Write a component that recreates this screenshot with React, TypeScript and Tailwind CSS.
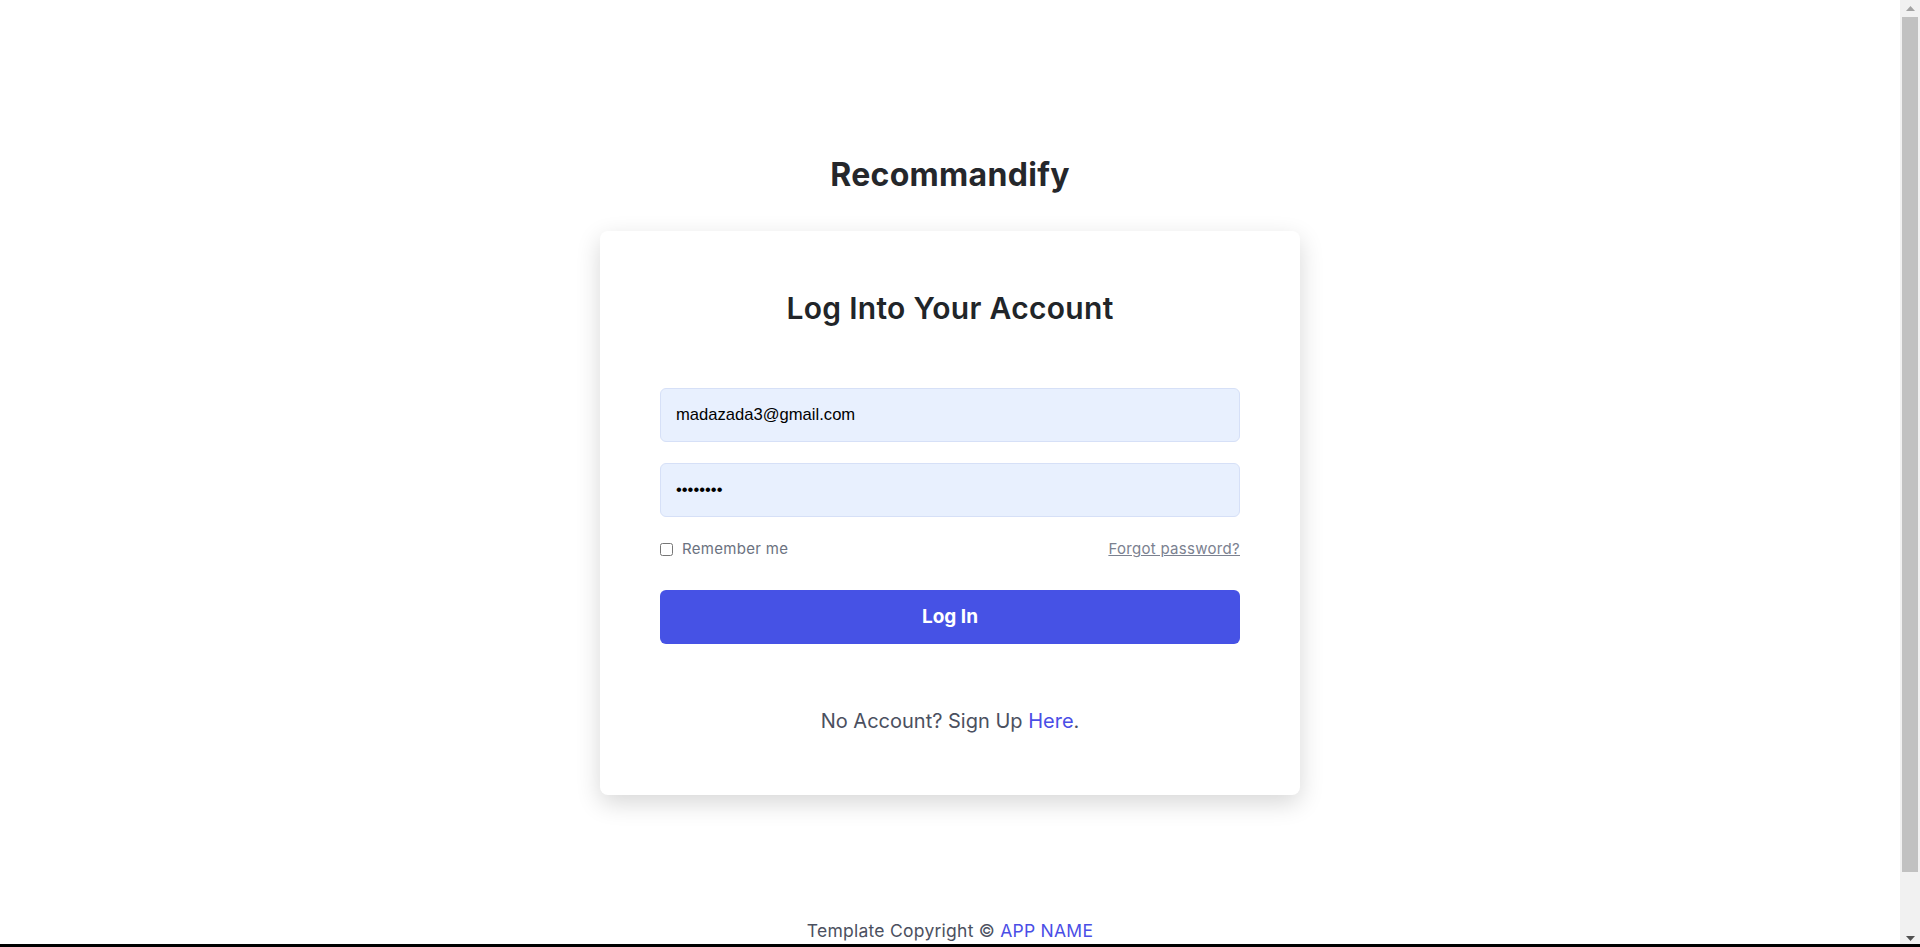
import { useState } from 'react';

const sans = "font-['Inter','Noto_Sans',sans-serif]";

function FakeScrollbar() {
  return (
    <div className="fixed top-0 right-0 h-screen w-[20px] bg-[#f1f1f1] flex flex-col items-center">
      <div className="h-[17px] w-full flex items-center justify-center">
        <svg width="9" height="5" viewBox="0 0 9 5">
          <path d="M0 5 L4.5 0 L9 5 Z" fill="#a3a3a3" />
        </svg>
      </div>
      <div className="w-[16px] h-[855px] bg-[#c1c1c1]" />
      <div className="flex-1" />
      <div className="h-[17px] w-full flex items-center justify-center">
        <svg width="9" height="5" viewBox="0 0 9 5">
          <path d="M0 0 L9 0 L4.5 5 Z" fill="#505050" />
        </svg>
      </div>
    </div>
  );
}

export default function App() {
  const [email, setEmail] = useState('madazada3@gmail.com');
  const [password, setPassword] = useState('password');

  return (
    <>
      <div className={`mr-[20px] min-h-[1015px] bg-white flex flex-col items-center ${sans}`}>
        <h1 className="mt-[155px] text-[32px] leading-[40px] font-bold tracking-[0.3px] text-[#25272b]">
          Recommandify
        </h1>

        <div className="mt-[36px] w-[700px] bg-white rounded-lg shadow-[0_8px_24px_rgba(0,0,0,0.16)] px-[60px] pt-[58px] pb-[60px]">
          <h2 className="text-center text-[30px] leading-[38px] font-semibold tracking-[0.3px] text-[#212529]">
            Log Into Your Account
          </h2>

          <form className="mt-[61px] flex flex-col" onSubmit={(e) => e.preventDefault()}>
            <input
              type="email"
              value={email}
              onChange={(e) => setEmail(e.target.value)}
              className="h-[54px] w-full rounded-md border border-[#d6e0f7] bg-[#e8f0fe] px-[15px] text-[16.6px] text-black outline-none font-['Liberation_Sans',Arial,sans-serif]"
            />
            <input
              type="password"
              value={password}
              onChange={(e) => setPassword(e.target.value)}
              className="mt-[21px] h-[54px] w-full rounded-md border border-[#d6e0f7] bg-[#e8f0fe] px-[15px] text-[16.6px] text-black outline-none font-['Liberation_Sans',Arial,sans-serif]"
            />

            <div className="mt-[22px] flex items-center justify-between text-[15px] leading-[20px] tracking-[0.3px] text-[#6b7280]">
              <label className="flex items-center gap-[9px]">
                <input type="checkbox" className="h-[13px] w-[13px] rounded-[3px] border border-gray-300 accent-[#4652e5]" />
                <span>Remember me</span>
              </label>
              <a href="#" className="underline text-[#7b8190]">
                Forgot password?
              </a>
            </div>

            <button
              type="submit"
              className="mt-[31px] h-[54px] w-full rounded-md bg-[#4652e5] text-white text-[19px] font-bold"
            >
              Log In
            </button>
          </form>

          <p className="mt-[63px] text-center text-[20px] leading-[28px] text-[#4b5060]">
            No Account? Sign Up{' '}
            <a href="#" className="text-[#4a4ee6]">
              Here
            </a>
            .
          </p>
        </div>

        <footer className="mt-[124px] text-[17.5px] leading-[24px] tracking-[0.25px] text-[#4b5060]">
          Template Copyright © <span className="text-[#4a4ee6]">APP NAME</span>
        </footer>
      </div>

      <FakeScrollbar />
      <div className="fixed bottom-0 left-0 right-0 h-[3px] bg-black" />
    </>
  );
}
